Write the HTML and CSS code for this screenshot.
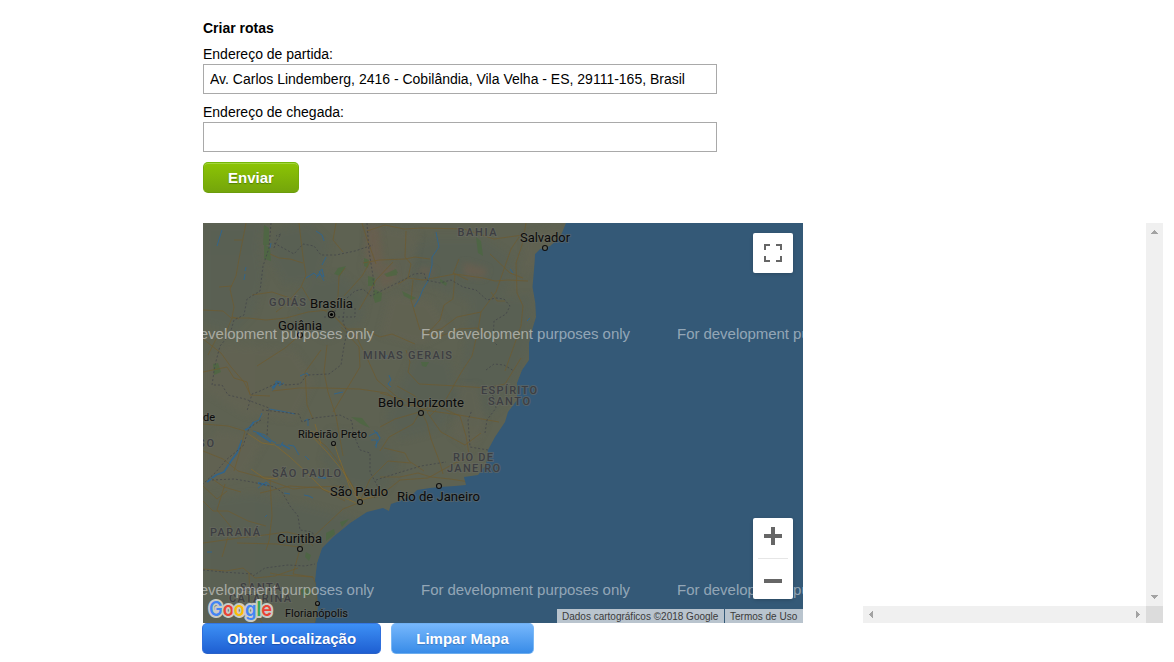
FILE: index.html
```html
<!DOCTYPE html>
<html lang="pt-BR">
<head>
<meta charset="utf-8">
<title>Criar rotas</title>
<link rel="stylesheet" href="styles.css">
</head>
<body>
<main class="page">
  <form class="route-form">
    <h1 class="title">Criar rotas</h1>
    <label class="label" for="from">Endereço de partida:</label>
    <input class="field" id="from" type="text" value="Av. Carlos Lindemberg, 2416 - Cobilândia, Vila Velha - ES, 29111-165, Brasil">
    <label class="label" for="to">Endereço de chegada:</label>
    <input class="field" id="to" type="text">
    <button class="btn btn-send" type="button">Enviar</button>
  </form>

  <section class="stage">
    <div class="map">
      <svg class="canvas" viewBox="203 223 600 400" width="600" height="400">
        <defs>
          <clipPath id="shore"><path d="M203 223H566L562 233 557 240 550 246 540 249 535 254 534 270 532.500 287 535.300 303 536 317 532 330 529 343 529 360 522 370 517 383 517 400 508 412 505 422 495 437 488 450 486 465 478 475 464 477 466 485 455 486 440 487 430 488 417 490 412 495 400 501 391 504 389 511 383 508 367 512 350 523 333 537 322 548 317 563 315 580 317 593 318 607 315 623H203Z"/></clipPath>
          <filter id="soft" x="-10%" y="-10%" width="120%" height="120%"><feGaussianBlur stdDeviation="3"/></filter>
        </defs>
        <rect class="sea" x="203" y="223" width="600" height="400"/>
        <g clip-path="url(#shore)">
          <rect class="land" x="203" y="223" width="370" height="400"/>
          <g class="moss" filter="url(#soft)">
            <path d="M203 223h60l-4 24 5 30-9 35-20 20-32-8zM275 230l35-7 20 20-10 38-36 4-14-25zM300 285l40-12 28 22-6 27-35 18-34-18zM390 255l40-18 52 0 30 20-6 38-30 10-44-18-36-5zM470 300l60-5 4 40-12 35-22 38-26 20-24-12 12-50zM415 350l35 10 10 40-20 30-40 10-15-22zM203 500l50-6 48 10 60 15-18 40-16 64h-124zM330 430l50 4 20 30-15 28-45-8-18-24z"/>
          </g>
          <g class="sand" filter="url(#soft)">
            <path d="M370 225l50 8-10 50-35 10-12-25zM225 345l70 5 20 30-20 40-50-5-42-25v-30zM390 295l40 5 20 30-30 15-40-10zM220 430l45 10-20 35-42 10v-40zM525 235l35-8-15 30-22 20zM460 385l18 0 8 40-14 25-20-15z"/>
          </g>
          <path class="rust" filter="url(#soft)" d="M367 224l12 5 4 35-10 10-7-22zM378 268l16-3 2 15-14 8zM463 262l25 7-4 9-20-2zM422 267l14 4-6 4-13-2z"/>
          <path class="woods" d="M264 225l5 3 0 17-6 0zM264 244l6 4 1 13-7-2zM338 268l8-2-6 10-6-2zM364 258l5 2-1 8-4-2zM368 276l7 2 0 8-7 0zM374 289l8 4-1 8-6 2-2-7zM387 273l9-4 2 4-8 3zM476 237l5 4 2 15-5-3zM384 274l11-4 2 5-10 2zM440 279l7 4-1 3-6-4zM402 291l14 7-4 2-8-4zM213 364l5-1 3 9-7 3zM351 417l11 1 8 10-9-4zM421 362l8 0-3 5-4-1zM300 590l9-2 3 6-8 3zM306 552l5 3-2 6-4-4zM326 533l8-4 1 5-9 7zM340 522l9-3-7 8z"/>

          <path class="river" d="M306 278l8-5 3 3 5-7 2 8-4-3-4 4M319 271l5 10M316 231l6 4 2 6M270 248l1-5M244 280l1-6M245 271l1-4M436 232l3 15-7 10 0 8-4 16-5 8-4 10-5 8M510 269l3 4M530 318l-3 3M272 391l3-4 1-6 5 1-2 4 5-3M300 376l7-3 2 3M334 394l9-2M389 375l2 5-3 4 3 3M369 436l8-4 3 6M371 440l6 0-1 8M374 430l6 8-5 8M269 409l12 2 14 3M252 423l7-3 3-7M253 431l12 4 7 6 4 2M280 447l3-5M288 445l6 1 5 9M304 421l4-2 0 7M280 445l-5 0M305 456l4 4M258 488l8-6 5 4M304 495l5 1 4 2M284 493l6 1M375 495l-4-1M398 493l3-2M207 552l5 0M265 517l2-2M222 230l-5 16M322 265l4-8M364 353l4 3M387 355l-2 4"/>
          <path class="river wide" d="M207 482l9-7 8-3 7-11 6-8 5-13M245 430l4-2 5-6M272 388l7-6M258 483l9 2M257 433l14 9M318 477l8 1M281 444l9 5"/>
          <path class="road" d="M246 223l-7 36-3 17-6 13 4 18-2 10 7 2M203 310l20 1 8 7 17 0 18 2 20-2 22-6 20-2M232 318l-5 12-11 9-8 16M234 240l8 0M219 287l13-1M299 223l4 34 3 18-5 12-15 17-10 8M270 254l9 4 11 1 13 4M302 287l10 17 15 8M300 310l-10-12-18-6-20 3M336 223l-3 17 10 12M345 268l-6 8-1 20-6 17M300 335l-15 13-28 18M203 372l24-5 7 11 13 4 3 13 20 1M203 339l18 14 10 14 13 15 6 12M203 424l25 2 17 5-5 20-6 20M203 451l20 8 15 12 22 6 22 0M211 478l13 9 17 5M272 391l27-3 25 0 35 1 28 4 16 12 20 1M321 350l-16 22 2 33 6 14M327 345l-3 27 4 20 8 24 7 40M341 327l18 20 1 20-12 20-15 25M331 313l15 16 17 0 17 8 12-3 23 10M331 313l26 25 10 20 10 22 20 17M359 310l17-30 17-18M344 296l18-20 8-14M362 223l4 13 10 28M363 263l16-3 26-1 10-2 15 2M367 231l18-6 19 4 18-1 42 1 30 10 29-4M406 231l-1 26 6 7-3 14-10 6M408 278l15 2 32-6 28 4 12 3 13-1 20 1M453 274l6-15M453 273l15 7M455 274l-2 25-9 6-4 15-12 13M413 280l-2 20 9 30 9 5M429 332l12-3 16-12 24-5 15-20 15-43 8-12M526 223l-4 22-6 18 1 30 6 13-2 20-16 45M481 312l-3 18-6 26-10 15-17 30-15 15M429 335l12 1 18-7 18-1 13 8M491 292l6 9 8 0M490 254l20 19 13 5M406 350l4 12-2 10 11 12 38 2 30 2 18-4 16-26M380 393l24 7 20 10 35 5 40 7M421 410l-8 14-24 13-9 14M421 410l6 13 4 16 9 24 3 11M421 410l14-5 25 11 6 20 3 18M421 410l-6-14-18-10M440 402l-13 10 14 20 24 13 16-12M380 427l15-8 28-8M384 448l21 5 4 8 15 10M359 500l-5-12-16-27-12-15-16-12M360 501l10-22 18-18 23 2M360 500l20-4 20-16 28-2 27-15 14-5M380 477l20 0 18-4 13 4 19 2 20 3M203 501l10 10 15 0 20 10 18 5M203 569l23 2 17-3 12 10 20-2 23-8M225 484l-8 26 14 17-9 30M270 480l2 36-3 25-3 9M260 477l33 12 20-2 33-1M203 543l36-5 18-2 30-4 17 4 9 10M299 547l-22-3-40-1M300 547l12-9 16-15 15-14 18-7M300 549l-7 25 20 3 4 10-2 36M313 577l-33-2-10-2M249 573l1 30 12 20M203 486l14 13 10-8M260 493l30-7 30 2 25 13"/>
          <path class="road gold" d="M247 433l15 10 13 2 15 12 15 14 18 18 20 8 13 6M251 469l13 9 14 1M310 434l17 18 15 18 8 13 9 17M320 434l-10-3M340 460l11 31 9 10M334 443l6 18M350 490l-7 5M360 500l14-4 12-5M355 490l9 14M315 424l6 20"/>
          <path class="border" d="M271 223l-2 25-6 18-3 25-13 8-3 16-10 5-4 14-10 12-5 19-3 20 10 0 6 10 17 4 24 9-1 12-1 16M274 248l3-8 4-6-5 2M274 243l20 11 9-10 11 2 7 9 15 0 19-4 18-6M367 223l2 28 4 25 1 16M347 298l8-7 8-2 8 7 10-5 16-8 10-5 7-4 10-1 2 7 14 3 11-3 12 7 13 3 11 10 9-2 8 1 6 7-4 8-12 7-1 20 5 5M345 300l-2 22 4 10-3 14-3 19-12 9-22 1-7 9-14 1-9-2-17 8-8 3-5 17M324 317h11v-9h20v9h-20M262 410l10 1 17 2 10 1 3 8 12-4 26-3 12 6 1 12 7 17 10 3 0 19 8 15-4 12M261 420l-12 8-6 18-17 14-10 12-13 12M212 480l22-1 18 3 22 5 8 5 8 14 8 10 2 14 12 2 5 9M253 576l12-8 23-3 17 1 10-2M222 572l31 2M376 480l25-8 20-6 25-4M485 433l2-13 9-12-2-11-8-9M488 450l-18-3-2-27 4-10M486 370l8-6 10 1 10 6M203 570l20 2"/>
        </g>
        <g class="state">
          <text x="457.500" y="235.500" textLength="39">BAHIA</text>
          <text x="269" y="305.500" textLength="37">GOIÁS</text>
          <text x="363" y="358.500" textLength="89">MINAS GERAIS</text>
          <text x="481" y="393.500" textLength="56">ESPÍRITO</text>
          <text x="488" y="404.500" textLength="42">SANTO</text>
          <text x="453" y="460.500" textLength="40">RIO DE</text>
          <text x="447" y="471.500" textLength="53">JANEIRO</text>
          <text x="272" y="476.500" textLength="69">SÃO PAULO</text>
          <text x="210" y="535.500" textLength="50">PARANÁ</text>
          <text x="240" y="590.500" textLength="41">SANTA</text>
          <text x="229" y="601.500" textLength="62">CATARINA</text>
          <text x="198" y="446.500" textLength="16">SO</text>
        </g>
        <g class="city">
          <text x="520" y="241.500" textLength="50" lengthAdjust="spacingAndGlyphs">Salvador</text>
          <text x="310" y="307.500" textLength="43" lengthAdjust="spacingAndGlyphs">Brasília</text>
          <text x="278" y="329.500" textLength="44" lengthAdjust="spacingAndGlyphs">Goiânia</text>
          <text x="378" y="406.500" textLength="86" lengthAdjust="spacingAndGlyphs">Belo Horizonte</text>
          <text x="330" y="495.500" textLength="58" lengthAdjust="spacingAndGlyphs">São Paulo</text>
          <text x="397" y="500.500" textLength="83" lengthAdjust="spacingAndGlyphs">Rio de Janeiro</text>
          <text x="277" y="542.500" textLength="45" lengthAdjust="spacingAndGlyphs">Curitiba</text>
          <text class="small" x="298" y="437.500" textLength="69">Ribeirão Preto</text>
          <text class="small" x="285" y="616.500" textLength="63">Florianópolis</text>
          <text class="small" x="203" y="420.500">de</text>
        </g>
        <g class="dot">
          <circle cx="545" cy="248" r="2.500"/><circle cx="300" cy="335" r="2.500"/><circle cx="421" cy="413" r="2.500"/><circle cx="333.500" cy="443.500" r="2"/><circle cx="439" cy="486" r="2.500"/><circle cx="360" cy="502" r="2.500"/><circle cx="300" cy="549" r="2.500"/><circle cx="317.500" cy="603.500" r="2"/><circle cx="331.500" cy="314.500" r="3.200"/>
        </g>
        <circle cx="331.500" cy="314.500" r="1.600"/>
        <g class="watermark">
          <text x="165" y="339" textLength="209">For development purposes only</text>
          <text x="421" y="339" textLength="209">For development purposes only</text>
          <text x="677" y="339" textLength="209">For development purposes only</text>
          <text x="165" y="595" textLength="209">For development purposes only</text>
          <text x="421" y="595" textLength="209">For development purposes only</text>
          <text x="677" y="595" textLength="209">For development purposes only</text>
        </g>
        <text class="logo" x="209" y="615.500" textLength="63" lengthAdjust="spacingAndGlyphs"><tspan fill="#4285f4">G</tspan><tspan fill="#ea4335">o</tspan><tspan fill="#fbbc05">o</tspan><tspan fill="#4285f4">g</tspan><tspan fill="#34a853">l</tspan><tspan fill="#ea4335">e</tspan></text>
      </svg>
      <div class="control fullscreen">
        <svg width="18" height="18" viewBox="0 0 18 18"><path d="M0 0h6v2H2v4H0zM12 0h6v6h-2V2h-4zM0 12h2v4h4v2H0zM16 12h2v6h-6v-2h4z"/></svg>
      </div>
      <div class="control zoom">
        <svg width="40" height="81" viewBox="0 0 40 81"><path d="M18 9h4v7h7v4h-7v7h-4v-7h-7v-4h7zM11 61h18v4H11z"/><path class="rule" d="M5 40h30v1H5z"/></svg>
      </div>
      <div class="credits"><span class="credit data">Dados cartográficos ©2018 Google</span><span class="credit terms">Termos de Uso</span></div>
    </div>

    <div class="directions">
      <div class="directions-body"></div>
      <div class="bar bar-y">
        <svg width="7" height="4" viewBox="0 0 7 4"><path d="M3 0h1v1h1v1h1v1h1v1H0V3h1V2h1V1h1z"/></svg>
        <svg width="7" height="4" viewBox="0 0 7 4"><path d="M0 0h7v1H6v1H5v1H4v1H3V3H2V2H1V1H0z"/></svg>
      </div>
      <div class="bar bar-x">
        <svg width="4" height="7" viewBox="0 0 4 7"><path d="M4 0v7H3V6H2V5H1V4H0V3h1V2h1V1h1V0z"/></svg>
        <svg width="4" height="7" viewBox="0 0 4 7"><path d="M0 0h1v1h1v1h1v1h1v1H3v1H2v1H1v1H0z"/></svg>
      </div>
      <div class="corner"></div>
    </div>
  </section>

  <div class="actions">
    <button class="btn btn-locate" type="button">Obter Localização</button>
    <button class="btn btn-clear" type="button">Limpar Mapa</button>
  </div>
</main>
</body>
</html>
```
FILE: styles.css
```css
* { box-sizing: border-box; }
body {
  margin: 0;
  background: #fff;
  color: #000;
  font: 14px/16px "Liberation Sans", Arial, sans-serif;
  overflow: hidden;
}
svg { display: block; }
.page { padding: 20px 0 0 203px; }
.route-form { display: flex; flex-direction: column; align-items: flex-start; }
.title { margin: 0 0 10px; font-size: 14px; line-height: 16px; }
.label { height: 18px; line-height: 16px; }
.field {
  width: 514px;
  height: 30px;
  margin: 0 0 10px;
  padding: 0 6px;
  border: 1px solid #a9a9a9;
  background: #fff;
  color: #000;
  font: inherit;
}
.btn {
  display: block;
  padding: 0;
  border: 1px solid;
  border-radius: 5px;
  color: #fff;
  font: bold 15px/20px "Liberation Sans", Arial, sans-serif;
  text-align: center;
  white-space: nowrap;
}
.btn-send {
  width: 96px;
  height: 31px;
  border-color: #74b807 #74ab0a #6b9c0c;
  background: linear-gradient(#8cc404, #74a50b);
  box-shadow: inset 0 1px #a4d43d;
  text-shadow: 0 1px 1px #527d06;
}
.stage { display: flex; gap: 60px; margin-top: 30px; }
.map { position: relative; width: 600px; height: 400px; overflow: hidden; }

.sea { fill: #345977; }
.land { fill: #5e6252; }
.moss { fill: #586155; opacity: .6; }
.sand { fill: #636352; opacity: .6; }
.rust { fill: #6a5e50; opacity: .8; }
.woods { fill: #48683d; opacity: .65; }
.river { fill: none; stroke: #2f658f; stroke-width: 1; opacity: .9; }
.wide { stroke-width: 1.8; }
.road { fill: none; stroke: #6e5b30; stroke-width: 1; stroke-linejoin: round; opacity: .75; }
.gold { stroke: #85692c; }
.border { fill: none; stroke: #43464a; stroke-width: 1; stroke-dasharray: 2 2; opacity: .8; }
.state text {
  font: 500 11px Roboto, sans-serif;
  fill: #3d3e42;
  stroke: #686a62;
  stroke-opacity: .6;
  stroke-width: 2px;
  paint-order: stroke;
}
.city text {
  font: 13px Roboto, sans-serif;
  fill: #0b0b0b;
  stroke: #686a62;
  stroke-opacity: .5;
  stroke-width: 2px;
  paint-order: stroke;
}
.city .small { font-size: 11px; }
.dot { fill: #62645a; stroke: #101010; stroke-width: 1.1; }
.watermark {
  font: 15px "Liberation Sans", Arial, sans-serif;
  fill: #fff;
  fill-opacity: .48;
}
.logo {
  font: 600 20px Inter, sans-serif;
  stroke: #c9cbc5;
  stroke-width: 4px;
  stroke-linejoin: round;
  paint-order: stroke;
}
.control {
  position: absolute;
  right: 10px;
  width: 40px;
  border-radius: 2px;
  background: #fff;
  box-shadow: 0 1px 4px -1px rgba(0, 0, 0, .3);
  fill: #666;
}
.fullscreen { top: 10px; height: 40px; padding: 11px; }
.zoom { top: 295px; height: 81px; }
.rule { fill: #e6e6e6; }
.credits {
  position: absolute;
  right: 0;
  bottom: 0;
  display: flex;
  gap: 1px;
  color: #3b3b3b;
  font: 10px/15px "Liberation Sans", Arial, sans-serif;
}
.credit { height: 14px; padding-left: 5px; background: #b9c4ce; white-space: nowrap; }
.data { width: 167px; }
.terms { width: 78px; }

.directions {
  display: grid;
  grid-template: 383px 17px / 283px 17px;
}
.bar { display: flex; align-items: center; justify-content: space-between; background: #f0f0f0; fill: #a3a3a3; }
.bar-y { flex-direction: column; padding: 7px 0; }
.bar-x { padding: 0 6px; }
.corner { background: #dcdcdc; }

.actions { display: flex; gap: 10px; margin-left: -1px; }
.btn-locate {
  width: 179px;
  height: 31px;
  border-color: #3577e2 #2f6fdc #2a62c8;
  background: linear-gradient(#3d90f5, #1e5fd2);
  text-shadow: 0 1px 1px #1c4fae;
}
.btn-clear {
  width: 143px;
  height: 31px;
  border-color: #70b0f2 #7ab8f5 #6cacec;
  background: linear-gradient(#76b7fc, #388ce8);
  text-shadow: 0 1px 1px #3b7ac4;
}
```
